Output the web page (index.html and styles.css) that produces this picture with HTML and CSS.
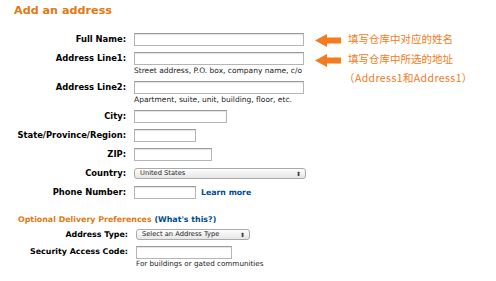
FILE: index.html
```html
<!DOCTYPE html>
<html>
<head>
<meta charset="utf-8">
<link rel="stylesheet" href="styles.css">
</head>
<body>
<div class="page">
  <h1 class="title">Add an address</h1>
  <div class="form">
    <label class="lbl r1">Full Name:</label>
    <div class="cell"><span class="inp w-full"></span></div>
    <label class="lbl">Address Line1:</label>
    <div class="cell"><span class="inp w-full"></span><span class="hint">Street address, P.O. box, company name, c/o</span></div>
    <label class="lbl">Address Line2:</label>
    <div class="cell"><span class="inp w-full"></span><span class="hint">Apartment, suite, unit, building, floor, etc.</span></div>
    <label class="lbl">City:</label>
    <div class="cell"><span class="inp w-city"></span></div>
    <label class="lbl">State/Province/Region:</label>
    <div class="cell"><span class="inp w-state"></span></div>
    <label class="lbl">ZIP:</label>
    <div class="cell"><span class="inp w-zip"></span></div>
    <label class="lbl">Country:</label>
    <div class="cell"><span class="sel w-country">United States<span class="arr">⬍</span></span></div>
    <label class="lbl">Phone Number:</label>
    <div class="cell row"><span class="inp w-state"></span><a class="link">Learn more</a></div>
  </div>
  <h2 class="sub">Optional Delivery Preferences <span class="link">(What's this?)</span></h2>
  <div class="form form2">
    <label class="lbl">Address Type:</label>
    <div class="cell"><span class="sel w-type">Select an Address Type<span class="arr">⬍</span></span></div>
    <label class="lbl">Security Access Code:</label>
    <div class="cell"><span class="inp w-code"></span><span class="hint">For buildings or gated communities</span></div>
  </div>

  <div class="note n1">
    <svg class="arrow" width="26" height="13" viewBox="0 0 26 13"><polygon points="0,6.5 12,0 12,3.5 26,3.5 26,9.5 12,9.5 12,13" fill="#f47b20"/></svg>
    <span>填写仓库中对应的姓名</span>
  </div>
  <div class="note n2">
    <svg class="arrow" width="26" height="13" viewBox="0 0 26 13"><polygon points="0,6.5 12,0 12,3.5 26,3.5 26,9.5 12,9.5 12,13" fill="#f47b20"/></svg>
    <span>填写仓库中所选的地址<br><span class="paren">（Address1和Address1）</span></span>
  </div>
</div>
</body>
</html>
```

FILE: styles.css
```css
html, body { margin: 0; padding: 0; background: #fff; }
body { font-family: "DejaVu Sans", Verdana, sans-serif; color: #000; }
.page { position: relative; width: 496px; height: 281px; overflow: hidden; padding: 4px 0 0 14px; box-sizing: border-box; }
.title { margin: 0; font-size: 11.2px; line-height: 13px; color: #e47911; font-weight: bold; }
.form { display: grid; grid-template-columns: 112px auto; column-gap: 8px; row-gap: 6px; margin-top: 16px; align-items: start; }
.lbl { font-size: 8.4px; font-weight: bold; text-align: right; line-height: 13px; white-space: nowrap; }
.cell { display: flex; flex-direction: column; align-items: flex-start; }
.cell.row { flex-direction: row; align-items: center; gap: 5px; }
.inp { display: block; height: 13px; box-sizing: border-box; border: 1px solid #b5b5b5; border-top-color: #9a9a9a; background: #fff; box-shadow: inset 0 1px 1px #e4e4e4; }
.w-full { width: 170px; }
.w-city { width: 93px; }
.w-state { width: 62px; }
.w-zip { width: 78px; }
.w-code { width: 96px; }
.hint { font-size: 7.5px; line-height: 8px; margin-top: 2px; color: #222; white-space: nowrap; }
.sel { position: relative; display: block; height: 11px; box-sizing: border-box; border: 1px solid #aaa; border-radius: 3px; background: linear-gradient(#fdfdfd, #e6e6e6); font-size: 6.7px; line-height: 9px; padding-left: 5px; color: #222; margin-top: 1px; }
.w-country { width: 172px; }
.w-type { width: 114px; }
.arr { position: absolute; right: 4px; top: 0; font-size: 6px; line-height: 9px; color: #333; }
.link { color: #004b91; font-weight: bold; font-size: 7.8px; }
.sub { margin: 15px 0 0 4px; font-size: 7.9px; line-height: 11px; color: #e47911; font-weight: bold; }
.sub .link { font-size: 7.9px; }
.form2 { grid-template-columns: 114px auto; margin-top: 4px; row-gap: 5px; }
.form2 .lbl { font-size: 7.9px; line-height: 12px; }
.form2 .sel { margin-top: 0; }
.form2 .hint { font-size: 7.2px; margin-top: 1px; line-height: 8px; }
.note { position: absolute; display: flex; align-items: flex-start; gap: 7px; font-family: "Noto Sans CJK SC", "DejaVu Sans", sans-serif; font-size: 10.5px; line-height: 19px; color: #f47b20; }
.note .arrow { flex: none; }
.note span { margin-top: -5px; }
.n1 { left: 315px; top: 34px; }
.n2 { left: 315px; top: 54px; }
.paren { margin-left: -4px; letter-spacing: 0.4px; }
```
